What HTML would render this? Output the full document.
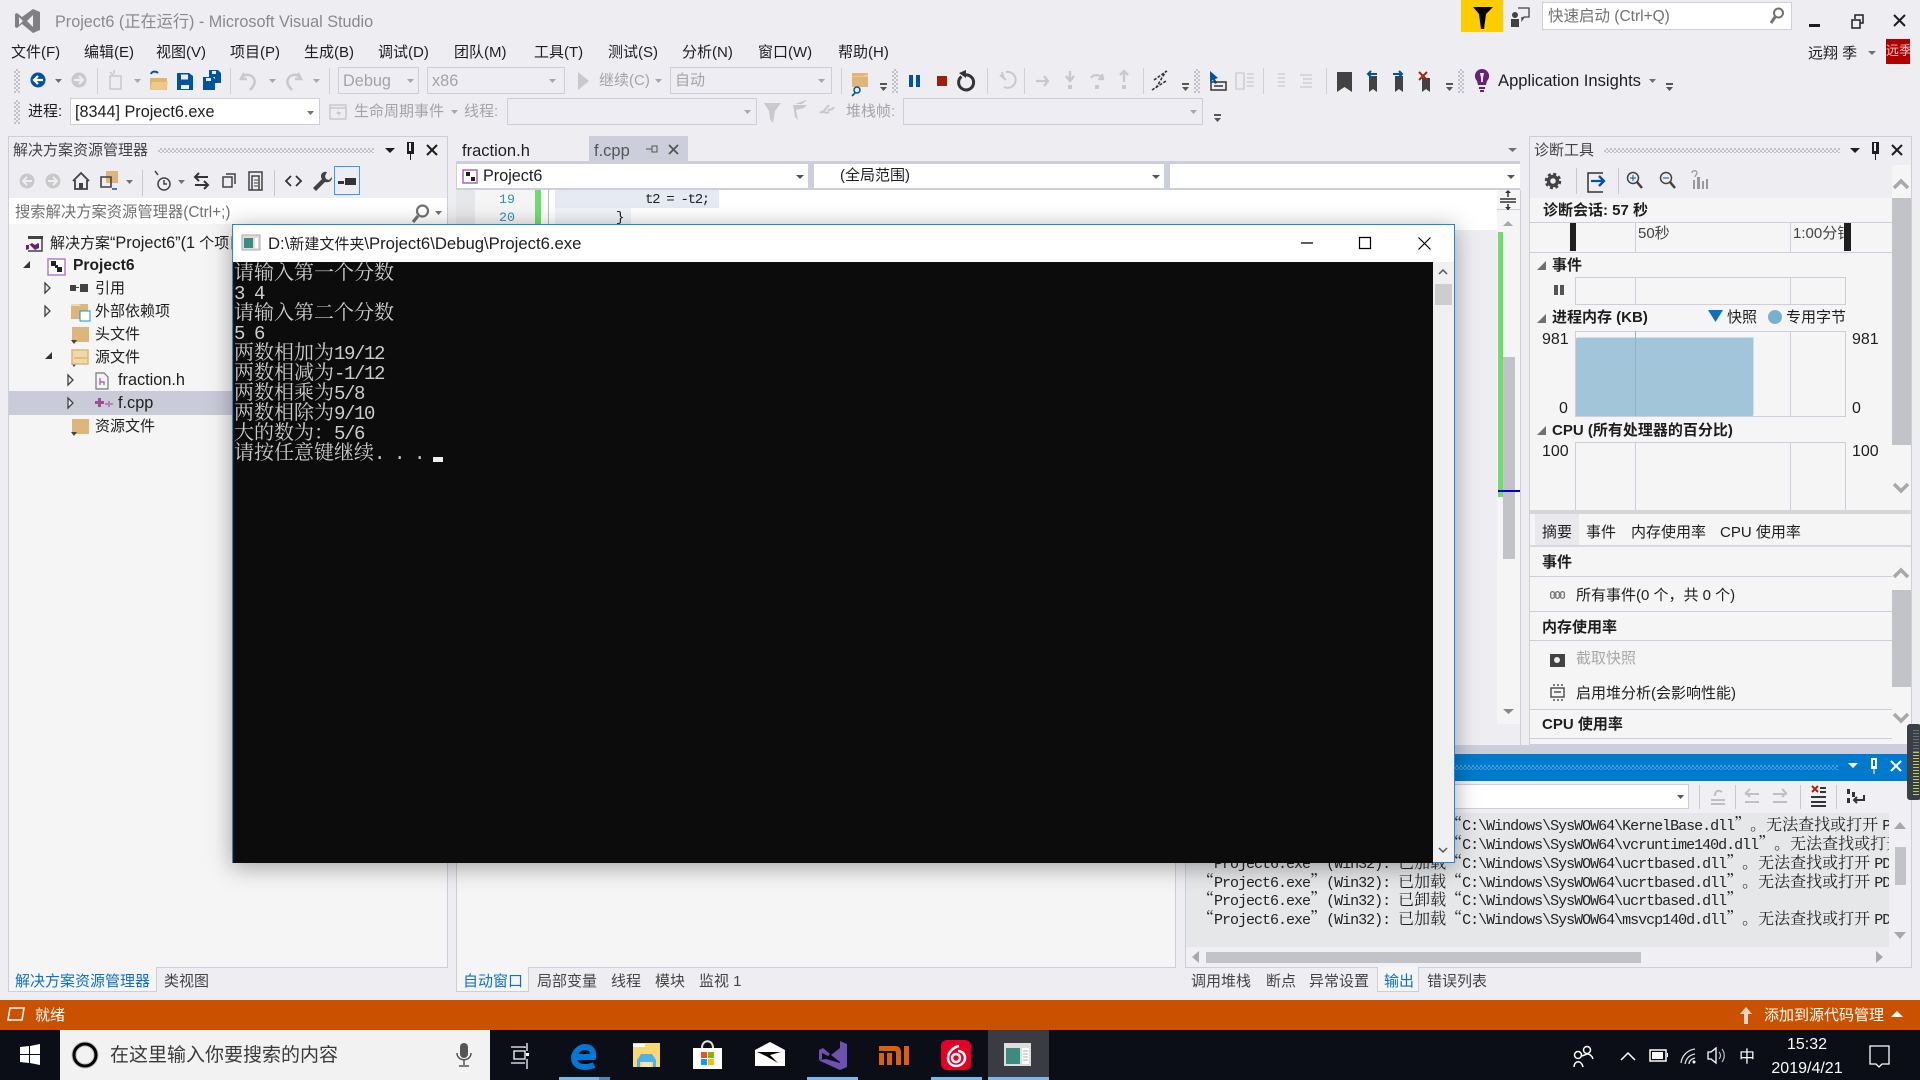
<!DOCTYPE html>
<html lang="zh-CN"><head><meta charset="utf-8"><title>Project6</title>
<style>
html,body{margin:0;padding:0;width:1920px;height:1080px;overflow:hidden;background:#eeeef2}
body{position:relative;font-family:"Liberation Sans","Noto Sans CJK SC",sans-serif;font-size:15px;color:#1e1e1e}
.r{position:absolute}
.t{position:absolute;white-space:nowrap;line-height:20px;height:20px;margin-top:2px}
.t u{text-decoration:none;font-size:16.3px}
.g{color:#a2a4a5}
.bd{font-weight:700}
.cb{position:absolute;box-sizing:border-box;border:1px solid #cccedb;background:#eeeef2}
.w{background:#fff}
.grip{position:absolute;background:repeating-conic-gradient(#c2c2ca 0 25%,transparent 0 50%) 0 0/4px 4px}
.o{position:absolute;left:1198px;white-space:pre;font-family:"Noto Serif CJK SC",serif;font-size:16px;line-height:19px;height:19px;width:691px;overflow:hidden;color:#222;text-spacing-trim:space-all}
.o b{font:15px/19px "Liberation Mono",monospace;letter-spacing:-1px}
.c{position:absolute;left:1px;white-space:pre;font-family:"Noto Serif CJK SC",serif;font-size:20px;line-height:20px;height:20px;color:#ccc;text-spacing-trim:space-all}
.c b{font:19px/20px "Liberation Mono",monospace;letter-spacing:-1.4px}
</style></head><body>

<!-- title & menu -->
<div class="t" style="left:55px;top:10px;font-size:16.2px;color:#8a8a8c">Project6 (正在运行) - Microsoft Visual Studio</div>
<div class="r" style="left:1461px;top:0;width:42px;height:32px;background:#fc0"></div>
<div class="r w" style="left:1542px;top:2px;width:248px;height:26px;border:1px solid #cccedb"></div>
<div class="t" style="left:1548px;top:5px;font-size:15.5px;color:#717171">快速启动 (Ctrl+Q)</div>
<div class="t" style="left:1808px;top:42px">远翔 季</div>
<div class="r" style="left:1886px;top:39px;width:24px;height:25px;background:#b00000;overflow:hidden"><span style="position:absolute;left:0;top:3px;white-space:nowrap;color:#f2c8c8;font-size:13px;line-height:18px">远季</span></div>

<div class="t" style="left:11px;top:41px">文件(F)</div>
<div class="t" style="left:84px;top:41px">编辑(E)</div>
<div class="t" style="left:156px;top:41px">视图(V)</div>
<div class="t" style="left:230px;top:41px">项目(P)</div>
<div class="t" style="left:304px;top:41px">生成(B)</div>
<div class="t" style="left:378px;top:41px">调试(D)</div>
<div class="t" style="left:454px;top:41px">团队(M)</div>
<div class="t" style="left:534px;top:41px">工具(T)</div>
<div class="t" style="left:608px;top:41px">测试(S)</div>
<div class="t" style="left:682px;top:41px">分析(N)</div>
<div class="t" style="left:758px;top:41px">窗口(W)</div>
<div class="t" style="left:838px;top:41px">帮助(H)</div>

<!-- toolbar 1 -->
<div class="grip" style="left:14px;top:69px;width:6px;height:24px"></div>
<div class="grip" style="left:892px;top:69px;width:6px;height:24px"></div>
<div class="grip" style="left:1194px;top:69px;width:6px;height:24px"></div>
<div class="grip" style="left:1458px;top:69px;width:6px;height:24px"></div>
<div class="grip" style="left:14px;top:100px;width:6px;height:24px"></div>
<div class="cb" style="left:338px;top:67px;width:81px;height:27px"></div>
<div class="t g" style="left:343px;top:69px;font-size:16.3px">Debug</div>
<div class="cb" style="left:427px;top:67px;width:138px;height:27px"></div>
<div class="t g" style="left:432px;top:69px;font-size:16.3px">x86</div>
<div class="t g" style="left:599px;top:69px">继续(C)</div>
<div class="cb" style="left:670px;top:67px;width:162px;height:27px"></div>
<div class="t g" style="left:675px;top:69px">自动</div>
<div class="t" style="left:1498px;top:69px;font-size:16.6px">Application Insights</div>

<!-- toolbar 2 -->
<div class="t" style="left:28px;top:100px">进程:</div>
<div class="cb w" style="left:70px;top:98px;width:250px;height:27px"></div>
<div class="t" style="left:75px;top:100px;font-size:16.2px">[8344] Project6.exe</div>
<div class="t g" style="left:354px;top:100px">生命周期事件</div>
<div class="t g" style="left:464px;top:100px">线程:</div>
<div class="cb" style="left:507px;top:98px;width:250px;height:27px"></div>
<div class="t g" style="left:846px;top:100px">堆栈帧:</div>
<div class="cb" style="left:903px;top:98px;width:300px;height:27px"></div>

<!-- solution explorer -->
<div class="r" style="left:8px;top:136px;width:440px;height:832px;box-sizing:border-box;border:1px solid #cccedb;background:#f5f5f5"></div>
<div class="r" style="left:9px;top:137px;width:438px;height:61px;background:#eeeef2"></div>
<div class="t" style="left:13px;top:139px;font-size:15px;color:#444">解决方案资源管理器</div>
<div class="grip" style="left:158px;top:148px;width:216px;height:5px"></div>
<div class="r w" style="left:9px;top:198px;width:438px;height:26px"></div>
<div class="t" style="left:15px;top:201px;font-size:15.3px;color:#717171">搜索解决方案资源管理器(Ctrl+;)</div>
<div class="r" style="left:334px;top:166px;width:24px;height:27px;border:1px solid #3399ff"></div>
<div class="r" style="left:9px;top:391px;width:438px;height:24px;background:#c9cbd9"></div>
<div class="t" style="left:50px;top:231px">解决方案<u>“Project6”(1</u> 个项目)</div>
<div class="t bd" style="left:73px;top:254px;font-size:15.6px">Project6</div>
<div class="t" style="left:95px;top:277px">引用</div>
<div class="t" style="left:95px;top:300px">外部依赖项</div>
<div class="t" style="left:95px;top:323px">头文件</div>
<div class="t" style="left:95px;top:346px">源文件</div>
<div class="t" style="left:118px;top:368px;font-size:16.3px">fraction.h</div>
<div class="t" style="left:118px;top:391px;font-size:16.3px">f.cpp</div>
<div class="t" style="left:95px;top:415px">资源文件</div>
<div class="r" style="left:8px;top:967px;width:149px;height:25px;box-sizing:border-box;border:1px solid #cccedb;border-top:0;background:#f5f5f5"></div>
<div class="t" style="left:15px;top:970px;color:#0e70c0">解决方案资源管理器</div>
<div class="t" style="left:164px;top:970px;color:#444">类视图</div>

<!-- editor -->
<div class="t" style="left:462px;top:139px;font-size:16.5px">fraction.h</div>
<div class="r" style="left:589px;top:136px;width:99px;height:25px;background:#cccedb"></div>
<div class="t" style="left:594px;top:139px;font-size:16.5px;color:#555">f.cpp</div>
<div class="r" style="left:456px;top:161px;width:1064px;height:29px;background:#cccedb"></div>
<div class="r w" style="left:457px;top:164px;width:351px;height:24px"></div>
<div class="r w" style="left:814px;top:164px;width:350px;height:24px"></div>
<div class="r w" style="left:1170px;top:164px;width:350px;height:24px"></div>
<div class="t" style="left:483px;top:164px;font-size:16.2px">Project6</div>
<div class="t" style="left:840px;top:164px;font-size:15px">(全局范围)</div>
<div class="r w" style="left:456px;top:190px;width:1044px;height:40px"></div>
<div class="r" style="left:456px;top:190px;width:19px;height:40px;background:#e6e7e8"></div>
<div class="r" style="left:475px;top:190px;width:60px;height:40px;background:#f5f5f5"></div>
<div class="r" style="left:535px;top:190px;width:6px;height:40px;background:#6fdc6f"></div>
<div class="r" style="left:548px;top:190px;width:1px;height:40px;background:#bbb"></div>
<div class="r" style="left:555px;top:190px;width:164px;height:18px;background:#e6ebf3"></div>
<div class="r" style="left:555px;top:208px;width:76px;height:22px;background:#f0f3f8"></div>
<div class="t" style="left:499px;top:188px;font:13.3px/20px 'Liberation Mono',monospace;color:#2b91af">19</div>
<div class="t" style="left:499px;top:206px;font:13.3px/20px 'Liberation Mono',monospace;color:#2b91af">20</div>
<div class="t" style="left:645px;top:188px;font:14px/20px 'Liberation Mono',monospace;letter-spacing:-1.3px;color:#222">t2 = -t2;</div>
<div class="t" style="left:616px;top:206px;font:14px/20px 'Liberation Mono',monospace;color:#222">}</div>
<!-- editor scrollbar -->
<div class="r" style="left:1497px;top:190px;width:23px;height:534px;background:#f5f5f5"></div>
<div class="r" style="left:1497px;top:190px;width:23px;height:20px;border-bottom:1px solid #cccedb;box-sizing:border-box"></div>
<div class="r" style="left:1503px;top:357px;width:12px;height:202px;background:#c2c3c9"></div>
<div class="r" style="left:1498px;top:232px;width:5px;height:265px;background:#6fdc6f"></div>
<div class="r" style="left:1498px;top:490px;width:22px;height:2px;background:#0000cd"></div>

<!-- middle lower panel -->
<div class="r" style="left:456px;top:724px;width:720px;height:244px;box-sizing:border-box;border:1px solid #cccedb;background:#f5f5f5"></div>
<div class="r" style="left:456px;top:967px;width:73px;height:25px;box-sizing:border-box;border:1px solid #cccedb;border-top:0;background:#f5f5f5"></div>
<div class="t" style="left:463px;top:970px;color:#0e70c0">自动窗口</div>
<div class="t" style="left:537px;top:970px;color:#444">局部变量</div>
<div class="t" style="left:611px;top:970px;color:#444">线程</div>
<div class="t" style="left:655px;top:970px;color:#444">模块</div>
<div class="t" style="left:699px;top:970px;color:#444">监视 1</div>

<!-- diag panel -->
<div class="r" style="left:1520px;top:190px;width:1px;height:555px;background:#cccedb"></div>
<div class="r" style="left:1529px;top:136px;width:383px;height:609px;box-sizing:border-box;border:1px solid #cccedb;background:#f5f5f5"></div>
<div class="r" style="left:1530px;top:137px;width:381px;height:61px;background:#eeeef2"></div>
<div class="t" style="left:1534px;top:139px;font-size:15px;color:#444">诊断工具</div>
<div class="grip" style="left:1604px;top:148px;width:236px;height:5px"></div>
<div class="r" style="left:1892px;top:165px;width:19px;height:33px;background:#f5f5f5"></div>
<div class="r" style="left:1892px;top:198px;width:19px;height:247px;background:#c2c3c9"></div>
<div class="t bd" style="left:1543px;top:199px;font-size:15px">诊断会话: 57 秒</div>
<div class="r" style="left:1530px;top:222px;width:362px;height:1px;background:#cccedb"></div>
<div class="r" style="left:1530px;top:252px;width:362px;height:1px;background:#cccedb"></div>
<div class="r" style="left:1635px;top:223px;width:1px;height:29px;background:#cccedb"></div>
<div class="r" style="left:1790px;top:223px;width:1px;height:29px;background:#cccedb"></div>
<div class="r" style="left:1570px;top:223px;width:6px;height:28px;background:#1e1e1e"></div>
<div class="r" style="left:1844px;top:223px;width:7px;height:28px;background:#1e1e1e"></div>
<div class="t" style="left:1638px;top:222px;color:#444;font-size:15px">50秒</div>
<div class="t" style="left:1793px;top:222px;color:#444;font-size:15px;width:51px;overflow:hidden">1:00分钟</div>
<div class="t bd" style="left:1552px;top:254px;font-size:15px">事件</div>
<div class="r" style="left:1575px;top:277px;width:271px;height:28px;box-sizing:border-box;border:1px solid #cccedb"></div>
<div class="r" style="left:1635px;top:277px;width:1px;height:28px;background:#cccedb"></div>
<div class="r" style="left:1790px;top:277px;width:1px;height:28px;background:#cccedb"></div>
<div class="t bd" style="left:1552px;top:306px;font-size:15px">进程内存 (KB)</div>
<div class="t" style="left:1727px;top:306px;font-size:15px">快照</div>
<div class="t" style="left:1786px;top:306px;font-size:15px">专用字节</div>
<div class="r" style="left:1575px;top:331px;width:271px;height:86px;box-sizing:border-box;border:1px solid #cccedb"></div>
<div class="r" style="left:1576px;top:338px;width:177px;height:78px;background:#a2c5d9;box-shadow:1px -1px 0 #cfe0ea"></div>
<div class="r" style="left:1635px;top:331px;width:1px;height:85px;background:#8fb3c9"></div>
<div class="r" style="left:1790px;top:331px;width:1px;height:85px;background:#cccedb"></div>
<div class="t" style="left:1542px;top:328px;font-size:16px">981</div>
<div class="t" style="left:1852px;top:328px;font-size:16px">981</div>
<div class="t" style="left:1559px;top:397px;font-size:16px">0</div>
<div class="t" style="left:1852px;top:397px;font-size:16px">0</div>
<div class="t bd" style="left:1552px;top:419px;font-size:15px">CPU (所有处理器的百分比)</div>
<div class="r" style="left:1575px;top:442px;width:271px;height:68px;box-sizing:border-box;border:1px solid #cccedb;border-bottom:0"></div>
<div class="r" style="left:1635px;top:442px;width:1px;height:68px;background:#cccedb"></div>
<div class="r" style="left:1790px;top:442px;width:1px;height:68px;background:#cccedb"></div>
<div class="t" style="left:1542px;top:440px;font-size:16px">100</div>
<div class="t" style="left:1852px;top:440px;font-size:16px">100</div>
<div class="r" style="left:1530px;top:510px;width:381px;height:4px;background:#d6d6da"></div>
<div class="r" style="left:1535px;top:514px;width:44px;height:31px;background:#e9e9ed"></div>
<div class="t" style="left:1542px;top:521px">摘要</div>
<div class="t" style="left:1586px;top:521px">事件</div>
<div class="t" style="left:1631px;top:521px">内存使用率</div>
<div class="t" style="left:1720px;top:521px">CPU 使用率</div>
<div class="r" style="left:1530px;top:545px;width:381px;height:2px;background:#d8d8e2"></div>
<div class="t bd" style="left:1542px;top:551px;font-size:15px">事件</div>
<div class="r" style="left:1530px;top:576px;width:362px;height:1px;background:#cccedb"></div>
<div class="t" style="left:1576px;top:584px">所有事件(0 个，共 0 个)</div>
<div class="r" style="left:1530px;top:611px;width:362px;height:1px;background:#cccedb"></div>
<div class="t bd" style="left:1542px;top:616px;font-size:15px">内存使用率</div>
<div class="r" style="left:1530px;top:640px;width:362px;height:1px;background:#cccedb"></div>
<div class="t" style="left:1576px;top:647px;color:#a8a8a8">截取快照</div>
<div class="t" style="left:1576px;top:682px">启用堆分析(会影响性能)</div>
<div class="r" style="left:1530px;top:709px;width:362px;height:1px;background:#cccedb"></div>
<div class="t bd" style="left:1542px;top:713px;font-size:15px">CPU 使用率</div>
<div class="r" style="left:1530px;top:738px;width:362px;height:1px;background:#cccedb"></div>
<div class="r" style="left:1892px;top:590px;width:19px;height:97px;background:#c2c3c9"></div>

<!-- output panel -->
<div class="r" style="left:1176px;top:745px;width:744px;height:9px;background:#cccedb"></div>
<div class="r" style="left:1185px;top:754px;width:727px;height:27px;background:#007acc"></div>
<div class="grip" style="left:1190px;top:765px;width:648px;height:5px;background:repeating-conic-gradient(#3f9bd9 0 25%,transparent 0 50%) 0 0/4px 4px"></div>
<div class="r" style="left:1185px;top:781px;width:727px;height:187px;box-sizing:border-box;border:1px solid #cccedb;border-top:0;background:#f0f0f4"></div>
<div class="r w" style="left:1200px;top:784px;width:489px;height:25px;border:1px solid #cccedb;box-sizing:border-box"></div>
<div class="r" style="left:1186px;top:813px;width:703px;height:134px;background:#e6e7e9"></div>
<div class="r" style="left:1889px;top:813px;width:22px;height:134px;background:#f0f0f4"></div>
<div class="r" style="left:1895px;top:847px;width:11px;height:38px;background:#c2c3c9"></div>
<div class="r" style="left:1206px;top:952px;width:435px;height:11px;background:#c2c3c9"></div>
<div class="o" style="top:814px">“<b>Project6.exe</b>”<b>(Win32): </b>已加载“<b>C:\Windows\SysWOW64\KernelBase.dll</b>”。无法查找或打开 <b>PDB</b></div>
<div class="o" style="top:833px">“<b>Project6.exe</b>”<b>(Win32): </b>已加载“<b>C:\Windows\SysWOW64\vcruntime140d.dll</b>”。无法查找或打开</div>
<div class="o" style="top:852px">“<b>Project6.exe</b>”<b>(Win32): </b>已加载“<b>C:\Windows\SysWOW64\ucrtbased.dll</b>”。无法查找或打开 <b>PDB</b></div>
<div class="o" style="top:871px">“<b>Project6.exe</b>”<b>(Win32): </b>已加载“<b>C:\Windows\SysWOW64\ucrtbased.dll</b>”。无法查找或打开 <b>PDB</b></div>
<div class="o" style="top:889px">“<b>Project6.exe</b>”<b>(Win32): </b>已卸载“<b>C:\Windows\SysWOW64\ucrtbased.dll</b>”</div>
<div class="o" style="top:908px">“<b>Project6.exe</b>”<b>(Win32): </b>已加载“<b>C:\Windows\SysWOW64\msvcp140d.dll</b>”。无法查找或打开 <b>PDB</b></div>
<div class="t" style="left:1191px;top:970px;color:#444">调用堆栈</div>
<div class="t" style="left:1266px;top:970px;color:#444">断点</div>
<div class="t" style="left:1309px;top:970px;color:#444">异常设置</div>
<div class="r" style="left:1377px;top:967px;width:42px;height:25px;box-sizing:border-box;border:1px solid #cccedb;border-top:0;background:#f5f5f5"></div>
<div class="t" style="left:1384px;top:970px;color:#0e70c0">输出</div>
<div class="t" style="left:1427px;top:970px;color:#444">错误列表</div>

<!-- status + taskbar -->
<div class="r" style="left:0;top:1000px;width:1920px;height:30px;background:#ca5100"></div>
<div class="t" style="left:35px;top:1004px;color:#fff">就绪</div>
<div class="t" style="left:1764px;top:1004px;color:#fff">添加到源代码管理</div>
<div class="r" style="left:0;top:1030px;width:1920px;height:50px;background:#0b0e16"></div>
<div class="r" style="left:60px;top:1030px;width:430px;height:50px;background:#f2f2f2"></div>
<div class="t" style="left:110px;top:1044px;font-size:19px;color:#3a3a3a">在这里输入你要搜索的内容</div>
<div class="r" style="left:988px;top:1030px;width:61px;height:50px;background:#3b3c43"></div>
<div class="r" style="left:559px;top:1077px;width:40px;height:3px;background:#76b9ed"></div>
<div class="r" style="left:599px;top:1077px;width:11px;height:3px;background:#4f87b5"></div>
<div class="r" style="left:807px;top:1077px;width:51px;height:3px;background:#76b9ed"></div>
<div class="r" style="left:931px;top:1077px;width:51px;height:3px;background:#76b9ed"></div>
<div class="r" style="left:988px;top:1077px;width:61px;height:3px;background:#76b9ed"></div>
<div class="t" style="left:1747px;top:1046px;color:#fff;font-size:16px;transform:translateX(-50%)">中</div>
<div class="t" style="left:1807px;top:1033px;color:#fff;font-size:16px;transform:translateX(-50%)">15:32</div>
<div class="t" style="left:1807px;top:1057px;color:#fff;font-size:16px;transform:translateX(-50%)">2019/4/21</div>

<!-- icon layer -->
<svg class="r" style="left:0;top:0" width="1920" height="1080" viewBox="0 0 1920 1080" fill="none">
<!-- VS logo title -->
<path fill="#808083" fill-rule="evenodd" d="M33 9l7 3v18l-7 3-11-9-5 4-2-1V14l2-1 5 4zM33 15l-6 6 6 6zM19 17v8l4-4z"/>
<!-- filter flag -->
<path fill="#000" d="M1473 7h20l-7 7-2 15-3 0-2-15z"/>
<!-- feedback -->
<path stroke="#424242" stroke-width="1.3" d="M1518 8h11v9h-5l-2 3v-3"/><path fill="#424242" d="M1512 15a3 3 0 1 1 6 0 3 3 0 1 1-6 0zM1511 19h8v8h-8z"/>
<!-- search quick -->
<path stroke="#717171" stroke-width="2" d="M1783 13a4.5 4.5 0 1 1-9 0 4.5 4.5 0 1 1 9 0z"/><path stroke="#717171" stroke-width="3" d="M1775 17l-4 6"/>
<!-- window buttons -->
<path fill="#1e1e1e" d="M1809 24h11v3h-11z"/>
<path stroke="#1e1e1e" stroke-width="1.5" d="M1852 20h8v8h-8zM1855 19v-4h8v8h-3" /><path stroke="#1e1e1e" stroke-width="2" d="M1894 15l11 11M1905 15l-11 11"/>
<path fill="#717171" d="M1868 51h8l-4 4zM1649 79h7l-3.5 4z"/>
<!-- toolbar 1 -->
<circle cx="38" cy="80" r="7.5" fill="#00539c"/><path stroke="#fff" stroke-width="2.2" d="M43 80h-9M38 76l-4 4 4 4"/>
<circle cx="79" cy="80" r="7.5" fill="#c9c9cb"/><path stroke="#eee" stroke-width="2.2" d="M74 80h9M79 76l4 4-4 4"/>
<path fill="#717171" d="M55 79h7l-3.5 4z"/><path fill="#a8a8ac" d="M134 79h7l-3.5 4zM269 79h7l-3.5 4zM313 79h7l-3.5 4zM407 79h7l-3.5 4zM549 79h7l-3.5 4zM655 79h7l-3.5 4zM818 79h7l-3.5 4z"/>
<path stroke="#c9c9cb" stroke-width="1.5" d="M110 76h11v13h-11zM114 70l0 4M110 72l3 3"/>
<path fill="#e0b66f" d="M150 78h17v12h-17z"/><path stroke="#00539c" stroke-width="2" d="M151 74c1-3 5-3 7-1"/><path fill="#efc98a" d="M152 82h16l-2 8h-16z"/>
<path fill="#00539c" fill-rule="evenodd" d="M177 73h12l4 3v14h-16zM181 74.500h7v5h-7zM181 85h8v4h-8z"/>
<path fill="#00539c" fill-rule="evenodd" d="M209 70h9l3 3v10h-6v-6h-6zM212 71h4v3h-4zM203 77h10l2 2v11h-12zM206 78h5v3h-5z"/>
<path stroke="#c9c9cb" stroke-width="2.5" d="M244 73l-3 6 6 0M241 79c3-6 11-5 13 0 2 4-1 8-4 11"/>
<path stroke="#c9c9cb" stroke-width="2.5" d="M298 73l3 6-6 0M301 79c-3-6-11-5-13 0-2 4 1 8 4 11"/>
<path fill="#d0d0d4" d="M97 68h1v26h-1zM230 68h1v26h-1zM329 68h1v26h-1zM841 68h1v26h-1zM987 68h1v26h-1zM1024 68h1v26h-1zM1143 68h1v26h-1zM1263 68h1v26h-1zM1326 68h1v26h-1z"/>
<path fill="#c9c9cb" d="M578 72l11 9-11 9z"/>
<path fill="#dcb67a" d="M852 73h16v14h-16z"/><path fill="#efc98a" d="M852 76h10l6-2v3h-16z"/><circle cx="857" cy="90" r="3" fill="none" stroke="#00539c" stroke-width="1.5"/><path stroke="#00539c" stroke-width="1.6" d="M855 93l-3 3"/>
<path fill="#555" d="M880 83h7v2h-7zM880 87h7l-3.500 4z"/>
<path fill="#00539c" d="M909 75h4v12h-4zM916 75h4v12h-4z"/>
<path fill="#9d1f0c" d="M937 76h10v10h-10z"/>
<path stroke="#333" stroke-width="3" d="M965 75a7.500 7.500 0 1 1-3.500 1.500"/><path fill="#333" d="M959 73l7-3v8z"/>
<path stroke="#c9c9cb" stroke-width="2" d="M1000 75l6 5M1006 72a8 8 0 1 1-2 15M1002 72l2 7"/>
<path stroke="#c9c9cb" stroke-width="2.3" d="M1036 81h12M1044 76l4 5-4 5M1070 71v9M1066 76l4 5 4-5M1091 78c2-4 9-4 12 1M1102 74l1 5-5 0M1124 82v-11M1120 75l4-4 4 4"/>
<path fill="#c9c9cb" d="M1068 85h4v4h-4zM1095 85h4v4h-4zM1122 85h4v4h-4z"/>
<path stroke="#333" stroke-width="1.6" stroke-dasharray="3 1.5" d="M1154 80l13-9M1152 90l14-9M1156 88l10-17"/>
<path fill="#555" d="M1182 83h7v2h-7zM1182 87h7l-3.500 4zM1446 83h7v2h-7zM1446 87h7l-3.500 4zM1666 83h7v2h-7zM1666 87h7l-3.500 4zM1214 114h7v2h-7zM1214 118h7l-3.500 4z"/>
<path fill="#00539c" d="M1210 71l0 11 3-2 2 4 2-1-2-4 3-1z"/><path stroke="#333" stroke-width="1.5" d="M1211 82h15v8h-15zM1214 86h9"/>
<path stroke="#d0d0d4" stroke-width="1.6" d="M1236 73h8v16h-8zM1247 74h7M1247 78h7M1247 82h7M1247 86h7M1278 74h7M1278 78h7M1278 82h7M1278 86h7"/>
<path stroke="#d0d0d4" stroke-width="1.6" d="M1300 75h12M1303 79h9M1303 83h9M1300 87h12"/>
<path fill="#424242" d="M1337 72h15v20l-7.5-5-7.5 5z"/>
<path fill="#424242" d="M1369 76h8v16l-4-3-4 3zM1395 76h8v16l-4-3-4 3zM1422 78h8v14l-4-3-4 3z"/>
<path stroke="#00539c" stroke-width="2" d="M1377 74h-9M1371 71l-3 3 3 3M1393 74h9M1399 71l3 3-3 3"/>
<path stroke="#a1260d" stroke-width="2" d="M1419 72l8 8M1427 72l-8 8"/>
<path fill="#68217a" d="M1482 69a7 7 0 0 1 5 12l-1 4h-8l-1-4a7 7 0 0 1 5-12zM1479 87h6v2h-6zM1480 90h4v2h-4z"/><path fill="#eeeef2" d="M1480 73h4l-1 5v4h-2v-4z"/>
<!-- toolbar 2 -->
<path fill="#717171" d="M307 111h7l-3.5 4z"/><path stroke="#c9c9cb" stroke-width="1.5" d="M330 105h16v14h-16zM330 108h16"/><path fill="#c9c9cb" d="M339 109l-3 5h3l-1 4 3-6h-3z"/>
<path fill="#a8a8ac" d="M451 110h7l-3.5 4zM744 110h7l-3.5 4zM1190 110h7l-3.5 4z"/>
<path fill="#c9c9cb" d="M764 103h17l-6 8-2 12-3-4-1-8zM793 105h14l-3 3-8 2 2 10-3-3-1-7zM806 100h1l-5 4h-7z"/>
<path stroke="#c9c9cb" stroke-width="2" d="M820 113c3-4 6 2 9-1M829 105l-7 8M834 107c-2 4-4 1-6 4"/>
<!-- panel head icons solution -->
<path fill="#1e1e1e" d="M385 148h10l-5 5z"/><path fill="#1e1e1e" d="M407 142h7v12h-7zM410 154h1v6h-1z"/><path fill="#eeeef2" d="M409 143h2v8h-2z"/>
<path stroke="#1e1e1e" stroke-width="2" d="M427 145l10 10M437 145l-10 10"/>
<circle cx="27" cy="181" r="7.5" fill="#c9c9cb"/><path stroke="#eee" stroke-width="2" d="M32 181h-9M27 177l-4 4 4 4"/>
<circle cx="53" cy="181" r="7.5" fill="#c9c9cb"/><path stroke="#eee" stroke-width="2" d="M48 181h9M53 177l4 4-4 4"/>
<path stroke="#424242" stroke-width="1.8" d="M73 181l8-8 8 8M75 180v9h12v-9"/><path fill="#424242" d="M79 183h4v6h-4z"/>
<path fill="#dcb67a" d="M106 171h12v12h-12z"/><path stroke="#424242" stroke-width="1.6" d="M101 177h10v10h-10z"/><path stroke="#00539c" stroke-width="1.5" d="M112 189h5"/><path fill="#717171" d="M126 180h7l-3.5 4zM178 180h7l-3.5 4z"/>
<path fill="#c9c9cb" d="M142 170h1v26h-1zM274 170h1v26h-1z"/>
<circle cx="164" cy="184" r="6" stroke="#424242" stroke-width="1.5"/><path stroke="#424242" stroke-width="1.5" d="M164 180v4h3M155 171l3 4"/>
<path stroke="#333" stroke-width="2" d="M195 177h13M199 173l-4 4 4 4M208 185h-13M204 181l4 4-4 4"/>
<path stroke="#424242" stroke-width="1.5" d="M223 177h9v10h-9zM226 174h9v10"/>
<path stroke="#424242" stroke-width="1.5" d="M249 172h13v18h-13zM252 176h7v14h-7z"/><path stroke="#424242" d="M254 180h4M254 183h4M254 186h4"/>
<path stroke="#333" stroke-width="1.8" d="M291 176l-5 5 5 5M296 176l5 5-5 5"/>
<path fill="#424242" d="M327 172c-3-1-6 1-6 4 0 1 0 2 1 3l-9 9 3 3 9-9c4 1 7-1 7-5l-3 3-3-1-1-3z"/>
<path fill="#333" d="M338 181h6v3h-6zM345 178h11v7h-11z"/>
<path stroke="#717171" stroke-width="2.2" d="M428 211a5.5 5.5 0 1 1-11 0 5.5 5.5 0 1 1 11 0z"/><path stroke="#717171" stroke-width="3.2" d="M418 216l-5 6"/>
<path fill="#717171" d="M435 211h7l-3.5 4z"/>
<!-- tree -->
<path stroke="#424242" stroke-width="1.5" d="M28 237h14v14h-14"/><path fill="#68217a" d="M26 250l3-1v-5l6 6 4-2v-4l-1-1-3 2-3-2-3 2-3 0z"/><path fill="#424242" d="M28 236h15v3h-15z"/>
<rect x="48" y="259" width="17" height="16" fill="#fff" stroke="#b57fc2" stroke-width="1.5"/><path fill="#222" d="M51 261h5v5h-5zM57 267h5v5h-5zM55 265h3v3h-3z"/>
<path fill="#333" d="M23 268l7-7v7zM45 359l7-7v7z"/><path fill="#eeeef2" stroke="#424242" stroke-width="1.3" d="M45 283v10l5-5zM45 306v10l5-5zM68 375v10l5-5zM68 398v10l5-5z"/>
<path fill="#424242" d="M70 285h6v6h-6zM76 287h3v1h-3zM80 284h8v8h-8z"/>
<path fill="#dcb67a" d="M71 304h17v15h-17z"/><path fill="#efd9b4" d="M71 304h8l2 2h-10z"/><rect x="80" y="311" width="10" height="10" fill="#fff" stroke="#1a8fd4"/>
<path fill="#dcb67a" d="M72 327h17v15h-17zM72 419h17v15h-17z"/><path fill="#444" d="M71 340h6l-3 4zM71 432h6l-3 4zM71 363h6l-3 4z"/><path fill="#f0d8a8" stroke="#dcb67a" stroke-width="1.5" d="M72 350h16v14h-16zM74 358h14"/>
<path stroke="#777" stroke-width="1.2" d="M96 373h8l4 4v12h-12z"/><path stroke="#b362b6" stroke-width="1.4" d="M100 378v7M100 382h4v3"/>
<path fill="#9b4f96" d="M98 401v-3h3v3h3v3h-3v3h-3v-3h-3v-3z"/><path fill="#b57fc2" d="M105 403h3v-2h2v2h3v2h-3v2h-2v-2h-3z"/>
<!-- editor tabs -->
<path fill="#717171" d="M1508 148h9l-4.5 4z"/>
<path stroke="#555" d="M646 149h6M652 146h5v6h-5z"/><path stroke="#555" stroke-width="1.8" d="M669 145l9 9M678 145l-9 9"/>
<rect x="463" y="170" width="14" height="13" fill="#fff" stroke="#a668b0" stroke-width="1.5"/><path fill="#222" d="M466 172h4v4h-4zM471 177h4v4h-4z"/>
<path fill="#555" d="M796 175h8l-4 4zM1152 175h8l-4 4zM1507 175h8l-4 4z"/>
<path stroke="#333" stroke-width="1.5" d="M1500 199h16M1500 202h16M1508 197v-6M1508 204v6"/><path fill="#333" d="M1505 193l3-3 3 3zM1505 207l3 3 3-3z"/>
<path fill="#a8a8ac" d="M1503 226l5-5 5 5z"/><path fill="#88888c" d="M1503 709h11l-5.500 5z"/>
<!-- diag head -->
<path fill="#1e1e1e" d="M1850 148h10l-5 5z"/><path fill="#1e1e1e" d="M1872 142h7v12h-7zM1875 154h1v6h-1z"/><path fill="#eeeef2" d="M1874 143h2v8h-2z"/>
<path stroke="#1e1e1e" stroke-width="2" d="M1892 145l10 10M1902 145l-10 10"/>
<circle cx="1553" cy="181" r="4.500" stroke="#424242" stroke-width="3.500"/><circle cx="1553" cy="181" r="7" stroke="#424242" stroke-width="2.500" stroke-dasharray="3 2.500"/>
<path stroke="#333" stroke-width="1.5" d="M1603 173h-15v19h15"/><path stroke="#00539c" stroke-width="2.3" d="M1591 181h13M1599 176l5 5-5 5"/>
<path fill="#c9c9cb" d="M1576 168h1v26h-1zM1618 168h1v26h-1z"/>
<circle cx="1633" cy="178" r="5.500" stroke="#424242" stroke-width="1.5"/><path stroke="#424242" stroke-width="2.5" d="M1637 182l5 6"/><path stroke="#00539c" d="M1633 175v6M1630 178h6"/>
<circle cx="1666" cy="178" r="5.500" stroke="#424242" stroke-width="1.5"/><path stroke="#424242" stroke-width="2.5" d="M1670 182l5 6"/><path stroke="#00539c" d="M1663 178h6"/>
<path fill="#999" d="M1693 180h2v9h-2zM1697 177h3v12h-3zM1702 181h2v8h-2zM1706 179h2v10h-2z"/><path stroke="#999" stroke-width="1.300" d="M1692 173c0-3 5-3 5 0 0 2-2 2-2 4"/>
<path stroke="#a8a8ac" stroke-width="3.500" d="M1894 188l7-7 7 7M1894 484l7 7 7-7M1894 577l7-7 7 7M1894 714l7 7 7-7"/>
<path fill="#707070" d="M1546 270h-9l9-9zM1546 323h-9l9-9zM1546 435h-9l9-9z"/>
<path fill="#555" d="M1554 285h4v10h-4zM1560 285h4v10h-4z"/>
<path fill="#0e70c0" d="M1708 310h15l-7.500 12z"/><circle cx="1775" cy="317" r="7" fill="#79b0cf"/>
<path stroke="#777" stroke-width="1.3" d="M1551 595a2 2 0 1 1 3 0 2 2 0 1 1-3 0zM1556 595a2 2 0 1 1 3 0 2 2 0 1 1-3 0zM1561 595a2 2 0 1 1 3 0 2 2 0 1 1-3 0z"/>
<path fill="#424242" d="M1550 654h15v13h-15z"/><circle cx="1557" cy="660" r="3" fill="#eee"/><path stroke="#555" stroke-width="1.500" d="M1551 688h13v9h-13zM1554 692h7M1554 686v-2M1558 686v-2M1562 686v-2M1554 699v2M1558 699v2M1562 699v2"/>
<!-- output head -->
<path fill="#fff" d="M1848 763h10l-5 5z"/><path fill="#fff" d="M1871 758h6v11h-6zM1873.500 769h1v5h-1z"/><path fill="#007acc" d="M1873 760h2v6h-2z"/>
<path stroke="#fff" stroke-width="2" d="M1891 761l10 10M1901 761l-10 10"/>
<path fill="#555" d="M1677 795h7l-3.500 4z"/>
<path fill="#c9c9cb" d="M1699 785h1v24h-1zM1735 785h1v24h-1zM1800 785h1v24h-1zM1836 785h1v24h-1z"/>
<path stroke="#c0c0c4" stroke-width="2" d="M1711 804h14M1711 800h14M1715 796c0-6 4-6 7-4M1745 794h14M1745 802h14M1773 794h14M1773 802h14M1750 797l-4-4 4-4M1782 797l4-4-4-4"/>
<path stroke="#a1260d" stroke-width="2" d="M1812 786l6 6M1818 786l-6 6"/><path stroke="#333" stroke-width="2" d="M1811 797h15M1811 802h15M1811 806h15M1820 788h6M1820 792h6"/>
<path stroke="#333" stroke-width="2" d="M1864 795v5h-10M1857 797l-3 3 3 3"/><path fill="#333" d="M1847 789h3v5h-3zM1852 792h3v5h-3zM1847 798h3v5h-3z"/>
<path fill="#a8a8ac" d="M1894 829l6-7 6 7zM1894 932l6 7 6-7zM1192 957l7-6v12zM1876 951v12l7-6z"/>
<!-- meter widget -->
<rect x="1907" y="724" width="14" height="76" rx="3" fill="#3a3f45"/><path stroke="#6b7076" stroke-width="6" stroke-dasharray="1 2" d="M1916 730v22"/><path stroke="#b3cf64" stroke-width="6" stroke-dasharray="1 2" d="M1916 752v44"/>
<!-- status icons -->
<path stroke="#fff" stroke-width="1.500" d="M8 1020l2-12h14l-2 12z"/>
<path fill="#e8d5c8" d="M1746 1007l6 7h-4v10h-4v-10h-4z"/><path fill="#fff" d="M1891 1017l6-6 6 6z"/>
<!-- taskbar -->
<path fill="#fff" d="M20 1047l9-1v8h-9zM30 1046l10-2v10h-10zM20 1055h9v8l-9-1zM30 1055h10v10l-10-2z"/>
<circle cx="85" cy="1055" r="11" stroke="#bbb" stroke-width="5"/><circle cx="85" cy="1055" r="11" stroke="#000" stroke-width="3"/>
<rect x="460" y="1043" width="8" height="15" rx="4" fill="#555"/><path stroke="#555" stroke-width="1.500" d="M457 1053c0 9 14 9 14 0M464 1060v5M459 1066h10"/>
<path stroke="#fff" stroke-width="1.300" d="M511 1047h14v1M514 1051h11v8h-11zM511 1063h14M527 1043v8M527 1059v10"/><path fill="#fff" d="M526 1053h3v3h-3z"/>
<path stroke="#0078d7" stroke-width="6" d="M574 1057h19c1-7-3-10-8-10s-11 5-11 11 5 9 11 9c4 0 7-1 9-2"/>
<path fill="#f8d775" d="M633 1043h27v24h-27z"/><path fill="#fff" d="M633 1044h12v3h-12z"/><path fill="#4fb2e6" d="M637 1060l4-6h11l4 6v7h-3v-5h-13v5h-3z"/><path fill="#f9e4a8" d="M642 1062h9v5h-9z"/>
<path stroke="#ddd" stroke-width="2" d="M702 1048c0-9 11-9 11 0"/><path fill="#fff" d="M693 1048h29v21h-29z"/><path fill="#f25022" d="M701 1052h6v6h-6z"/><path fill="#7fba00" d="M708 1052h6v6h-6z"/><path fill="#00a4ef" d="M701 1059h6v6h-6z"/><path fill="#ffb900" d="M708 1059h6v6h-6z"/>
<path fill="#fff" d="M755 1050l15-8 15 8v16h-30z"/><path fill="#000" d="M757 1052h24l-11 3 8 8-12-7z"/>
<path fill="#6e50b0" fill-rule="evenodd" d="M840 1041l7 3v23l-7 3-22-10 8-1 14 4zM840 1048l-9 7 9 7zM819 1050l4-2 7 6-2 2-6-3v6l-3 2z"/>
<path fill="#d9600f" d="M879 1046h16c4 0 6 2 6 6v13h-5v-12c0-2-1-2-2-2h-15zM879 1053h5v12h-5zM887 1053h5v12h-5zM904 1046h5v19h-5z"/>
<rect x="941" y="1040" width="30" height="30" rx="6" fill="#e60026"/><circle cx="956" cy="1058" r="4" stroke="#fff" stroke-width="2.500"/><path stroke="#fff" stroke-width="2.500" d="M959 1046c-5 1-11 6-11 12 0 5 4 8 8 8 5 0 9-4 9-8 0-5-4-7-7-7"/>
<rect x="1004" y="1043" width="27" height="23" fill="#ddd"/><rect x="1006" y="1048" width="14" height="16" fill="#3d8a7f"/><rect x="1022" y="1048" width="7" height="16" fill="#fff"/><path stroke="#9fb5b5" d="M1023 1051h5M1023 1054h5M1023 1057h5M1023 1060h5"/>
<!-- tray -->
<circle cx="1587" cy="1050" r="3.500" stroke="#fff" stroke-width="1.500"/><circle cx="1578" cy="1055" r="3.500" stroke="#fff" stroke-width="1.500"/><path stroke="#fff" stroke-width="1.500" d="M1574 1067c0-6 7-8 9 0M1582 1056l5-2c3 0 5 2 6 5"/>
<path stroke="#fff" stroke-width="1.500" d="M1621 1060l7-7 7 7"/>
<rect x="1650" y="1050" width="16" height="11" stroke="#fff" stroke-width="1.500"/><rect x="1652" y="1052" width="11" height="7" fill="#fff"/><path fill="#fff" d="M1667 1053h1v4h-1z"/>
<path stroke="#ddd" stroke-width="1.300" d="M1681 1063c1-8 7-13 14-14M1685 1064c1-5 4-9 10-10M1689 1064c0-3 2-5 6-6"/><circle cx="1694" cy="1062" r="1.500" fill="#fff"/>
<path stroke="#fff" stroke-width="1.300" d="M1708 1052h3l5-4v15l-5-4h-3z"/><path stroke="#bbb" stroke-width="1.200" d="M1719 1052c2 2 2 5 0 7M1722 1049c3 4 3 9 0 13"/>
<path stroke="#fff" stroke-width="1.300" d="M1870 1046h19v18h-7l-3 3-3-3h-6z"/>
</svg>

<!-- console window -->
<div class="r" style="left:232px;top:224px;width:1223px;height:639px;box-sizing:border-box;border:1px solid #1e88d8;background:#fff;box-shadow:0 4px 22px rgba(0,0,0,.35);z-index:10">
 <div class="r" style="left:0;top:37px;width:1200px;height:601px;background:#0c0c0c;overflow:hidden">
  <div class="c" style="top:-1px">请输入第一个分数</div>
  <div class="c" style="top:19px"><b>3 4</b></div>
  <div class="c" style="top:39px">请输入第二个分数</div>
  <div class="c" style="top:59px"><b>5 6</b></div>
  <div class="c" style="top:79px">两数相加为<b>19/12</b></div>
  <div class="c" style="top:99px">两数相减为<b>-1/12</b></div>
  <div class="c" style="top:119px">两数相乘为<b>5/8</b></div>
  <div class="c" style="top:139px">两数相除为<b>9/10</b></div>
  <div class="c" style="top:159px">大的数为：<b>5/6</b></div>
  <div class="c" style="top:179px">请按任意键继续<b>. . .</b></div>
  <div class="r" style="left:200px;top:195px;width:10px;height:5px;background:#eee"></div>
 </div>
 <div class="r" style="left:1200px;top:37px;width:21px;height:600px;background:#f0f0f0"></div>
 <div class="r" style="left:1202px;top:59px;width:17px;height:21px;background:#cdcdcd"></div>
 <div class="t" style="left:35px;top:7px;font-size:15px"><span style="font-size:16.7px">D:\</span>新建文件夹<span style="font-size:16.7px">\Project6\Debug\Project6.exe</span></div>
 <svg class="r" style="left:0;top:0" width="1221" height="637" fill="none">
  <rect x="9" y="10" width="18" height="15" fill="#ddd" stroke="#aaa"/><rect x="11" y="13" width="9" height="10" fill="#3d8a7f"/><rect x="22" y="13" width="3" height="10" fill="#fff"/>
  <path stroke="#000" stroke-width="1.200" d="M1068 18h12M1126.500 12.500h11v11h-11zM1185.500 12.500l12 12M1197.500 12.500l-12 12"/>
  <path stroke="#555" stroke-width="1.500" d="M1206 49l4-4 4 4M1206 623l4 4 4-4"/>
 </svg>
</div>
</body></html>
